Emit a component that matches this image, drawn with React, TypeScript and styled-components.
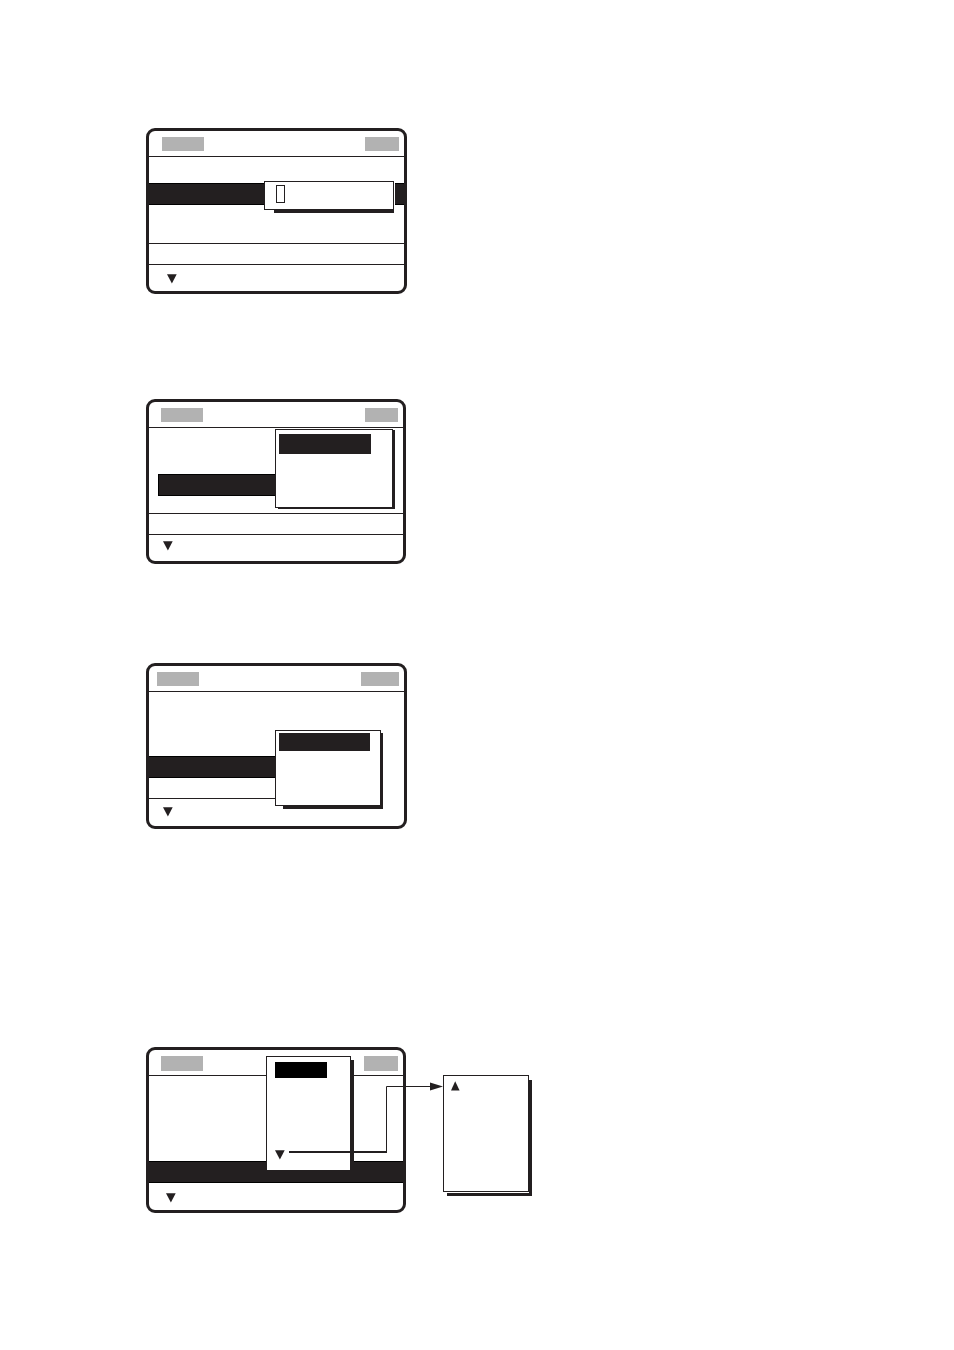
import React from "react";
import styled, { createGlobalStyle } from "styled-components";

const ink = "#231f20";

const GlobalStyle = createGlobalStyle`
  body {
    margin: 0;
    background: #ffffff;
    color: ${ink};
    font-family: "Liberation Sans", Arial, sans-serif;
  }
  *, *::before { box-sizing: border-box; }
  svg { display: block; }
`;

const Page = styled.main`
  display: flex;
  flex-direction: column;
  padding: 128px 16px 136px 146px;
`;

const Figure = styled.figure<{ $before?: number }>`
  position: relative;
  display: flex;
  align-items: flex-start;
  gap: 37px;
  margin: ${(p) => p.$before ?? 0}px 0 0;
`;

const Screen = styled.section<{ $wide?: boolean }>`
  position: relative;
  display: flex;
  flex-direction: column;
  width: ${(p) => (p.$wide ? 261 : 260)}px;
  border: 3px solid ${ink};
  border-radius: 9px;
`;

const Header = styled.header<{ $indent: number }>`
  display: flex;
  justify-content: space-between;
  height: 25px;
  padding: 6px 5px 0 ${(p) => p.$indent}px;
`;

const Tag = styled.span<{ $width: number; $height?: number }>`
  width: ${(p) => p.$width}px;
  height: ${(p) => p.$height ?? 14}px;
  background: #b2b2b2;
`;

const Rule = styled.div<{ $half?: boolean }>`
  width: ${(p) => (p.$half ? "50%" : "100%")};
  height: 1px;
  background: ${ink};
`;

const Rows = styled.div<{ $height: number }>`
  height: ${(p) => p.$height}px;
`;

const Band = styled.div<{ $indent?: number; $half?: boolean }>`
  width: ${(p) => (p.$half ? "50%" : "100%")};
  height: 22px;
  background: ${ink};
  background-clip: padding-box;
  border: solid #000000;
  border-width: 1px 0;
  ${(p) =>
    p.$indent
      ? `width: calc(50% - ${p.$indent}px); margin-left: ${p.$indent}px; border-left-width: 1px;`
      : ""}
`;

const Footer = styled.footer<{ $height: number; $top: number; $indent: number }>`
  height: ${(p) => p.$height}px;
  padding: ${(p) => p.$top}px 0 0 ${(p) => p.$indent}px;
`;

type Shade = { left: number; top: number; right: number; bottom: number };

const Shadowed = styled.div<{ $width: number; $height: number; $shade: Shade }>`
  position: relative;
  isolation: isolate;
  display: flex;
  width: ${(p) => p.$width}px;
  height: ${(p) => p.$height}px;
  &::before {
    content: "";
    position: absolute;
    z-index: -1;
    left: ${(p) => p.$shade.left}px;
    top: ${(p) => p.$shade.top}px;
    right: -${(p) => p.$shade.right}px;
    bottom: -${(p) => p.$shade.bottom}px;
    background: ${ink};
  }
`;

const Popup = styled(Shadowed)<{ $x: number; $y: number }>`
  position: absolute;
  left: ${(p) => p.$x}px;
  top: ${(p) => p.$y}px;
`;

const Face = styled.div<{ $pad: string; $open?: boolean; $gap?: "right" | "bottom" }>`
  flex: 1;
  display: flex;
  flex-direction: column;
  align-items: flex-start;
  justify-content: space-between;
  padding: ${(p) => p.$pad};
  background: #ffffff;
  border: 1px solid ${ink};
  border-bottom-width: ${(p) => (p.$open ? 0 : 1)}px;
  box-shadow: ${(p) =>
    p.$gap === "right" ? "1px 0 #ffffff" : p.$gap === "bottom" ? "0 1px #ffffff" : "none"};
`;

const Choice = styled.div<{ $width: number; $height: number; $color?: string }>`
  width: ${(p) => p.$width}px;
  height: ${(p) => p.$height}px;
  background: ${(p) => p.$color ?? ink};
`;

const Cursor = styled.span`
  width: 9px;
  height: 18px;
  border: 1px solid ${ink};
`;

const Continuation = styled.div`
  margin-top: 28px;
`;

const Connector = styled.svg`
  position: absolute;
  left: 143px;
  top: 34px;
`;

const Down = () => (
  <svg width="10" height="10" viewBox="0 0 10 10" aria-hidden="true">
    <path d="M0 0.3H9.7L4.9 9.6Z" fill={ink} />
  </svg>
);

const Up = () => (
  <svg width="9" height="10" viewBox="0 0 9 10" aria-hidden="true">
    <path d="M4.2 0.3L8.6 9.6H0Z" fill={ink} />
  </svg>
);

export default function App() {
  return (
    <>
      <GlobalStyle />
      <Page>
        <Figure>
          <Screen $wide>
            <Header $indent={13}>
              <Tag $width={42} />
              <Tag $width={34} />
            </Header>
            <Rule />
            <Rows $height={26} />
            <Band />
            <Rows $height={38} />
            <Rule />
            <Rows $height={20} />
            <Rule />
            <Footer $height={26} $top={9} $indent={18}>
              <Down />
            </Footer>
            <Popup $x={115} $y={50} $width={130} $height={29} $shade={{ left: 10, top: 10, right: 0, bottom: 3 }}>
              <Face $pad="3px 11px" $gap="right">
                <Cursor />
              </Face>
            </Popup>
          </Screen>
        </Figure>

        <Figure $before={105}>
          <Screen>
            <Header $indent={12}>
              <Tag $width={42} />
              <Tag $width={33} />
            </Header>
            <Rule />
            <Rows $height={46} />
            <Band $indent={9} $half />
            <Rows $height={17} />
            <Rule />
            <Rows $height={20} />
            <Rule />
            <Footer $height={26} $top={6} $indent={14}>
              <Down />
            </Footer>
            <Popup $x={126} $y={27} $width={118} $height={79} $shade={{ left: 3, top: 1, right: 2, bottom: 1 }}>
              <Face $pad="4px 3px">
                <Choice $width={92} $height={20} />
              </Face>
            </Popup>
          </Screen>
        </Figure>

        <Figure $before={99}>
          <Screen $wide>
            <Header $indent={8}>
              <Tag $width={42} />
              <Tag $width={38} />
            </Header>
            <Rule />
            <Rows $height={64} />
            <Band $half />
            <Rows $height={20} />
            <Rule $half />
            <Footer $height={27} $top={8} $indent={14}>
              <Down />
            </Footer>
            <Popup $x={126} $y={64} $width={106} $height={76} $shade={{ left: 8, top: 3, right: 2, bottom: 3 }}>
              <Face $pad="2px 3px">
                <Choice $width={91} $height={18} />
              </Face>
            </Popup>
          </Screen>
        </Figure>

        <Figure $before={218}>
          <Screen>
            <Header $indent={12}>
              <Tag $width={42} $height={15} />
              <Tag $width={34} $height={15} />
            </Header>
            <Rule />
            <Rows $height={85} />
            <Band />
            <Footer $height={27} $top={10} $indent={17}>
              <Down />
            </Footer>
            <Popup $x={117} $y={6} $width={85} $height={114} $shade={{ left: 10, top: 4, right: 3, bottom: 0 }}>
              <Face $pad="5px 8px 10px" $open>
                <Choice $width={52} $height={16} $color="#000000" />
                <Down />
              </Face>
            </Popup>
          </Screen>
          <Continuation>
            <Shadowed $width={86} $height={117} $shade={{ left: 4, top: 5, right: 3, bottom: 4 }}>
              <Face $pad="5px 7px" $gap="bottom">
                <Up />
              </Face>
            </Shadowed>
          </Continuation>
          <Connector width="154" height="74" viewBox="0 0 154 74" aria-hidden="true">
            <path d="M0 71H98" fill="none" stroke={ink} strokeWidth="2" />
            <path d="M97.5 71V5.500H144" fill="none" stroke={ink} strokeWidth="1" />
            <path d="M141 1.500L154 5.500L141 9.500Z" fill={ink} />
          </Connector>
        </Figure>
      </Page>
    </>
  );
}
